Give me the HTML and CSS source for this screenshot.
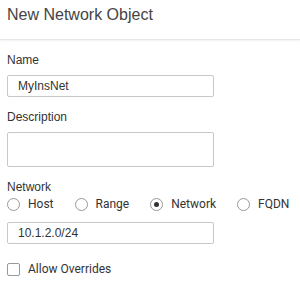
FILE: index.html
```html
<!DOCTYPE html>
<html>
<head>
  <title>New Network Object</title>
  <link rel="stylesheet" href="styles.css">
</head>
<body>
  <div class="dialog">
    <div class="header">
      <h1>New Network Object</h1>
    </div>

    <div class="form">
      <div class="field">
        <label class="label">Name</label>
        <div class="input">MyInsNet</div>
      </div>

      <div class="field">
        <label class="label">Description</label>
        <div class="input textarea"></div>
      </div>

      <div class="field">
        <label class="label">Network</label>
        <div class="radios">
          <span class="radio"><span class="dot"></span>Host</span>
          <span class="radio"><span class="dot"></span>Range</span>
          <span class="radio checked"><span class="dot"></span>Network</span>
          <span class="radio"><span class="dot"></span>FQDN</span>
        </div>
        <div class="input">10.1.2.0/24</div>
      </div>

      <div class="check">
        <span class="box"></span>Allow Overrides
      </div>
    </div>
  </div>
</body>
</html>
```

FILE: styles.css
```css
body {
  margin: 0;
  background: #fff;
  font-family: "Liberation Sans", Arial, sans-serif;
  color: #333;
}
.header {
  height: 39px;
  padding-left: 7px;
  border-bottom: 1px solid #e6e6e6;
  box-shadow: 0 1px 2px rgba(0,0,0,0.06);
}
.header h1 {
  margin: 0;
  padding-top: 6px;
  font-size: 16px;
  font-weight: normal;
  line-height: 18px;
  color: #444;
}
.form {
  padding: 13px 7px 0;
}
.field { margin-bottom: 13px; }
.label {
  display: block;
  font-size: 12px;
  line-height: 14px;
  margin-bottom: 8px;
}
.input {
  box-sizing: border-box;
  width: 207px;
  height: 22px;
  padding-left: 10px;
  border: 1px solid #c8c8c8;
  border-radius: 2px;
  font-size: 12px;
  line-height: 20px;
}
.textarea { height: 35px; }
.radios {
  display: flex;
  align-items: center;
  height: 14px;
  margin: -5px 0 11px;
  font-family: Roboto, "Liberation Sans", sans-serif;
  font-size: 12px;
}
.radio {
  display: flex;
  align-items: center;
  margin-right: 21px;
}
.dot {
  box-sizing: border-box;
  width: 13px;
  height: 13px;
  margin-right: 8px;
  border: 1px solid #999;
  border-radius: 50%;
  display: flex;
  align-items: center;
  justify-content: center;
}
.radio.checked .dot::after {
  content: "";
  width: 5px;
  height: 5px;
  border-radius: 50%;
  background: #333;
}
.check {
  display: flex;
  align-items: center;
  margin-top: 18px;
  font-family: Roboto, "Liberation Sans", sans-serif;
  font-size: 12px;
}
.box {
  box-sizing: border-box;
  width: 13px;
  height: 13px;
  margin-right: 8px;
  border: 1px solid #999;
  border-radius: 2px;
}
```
